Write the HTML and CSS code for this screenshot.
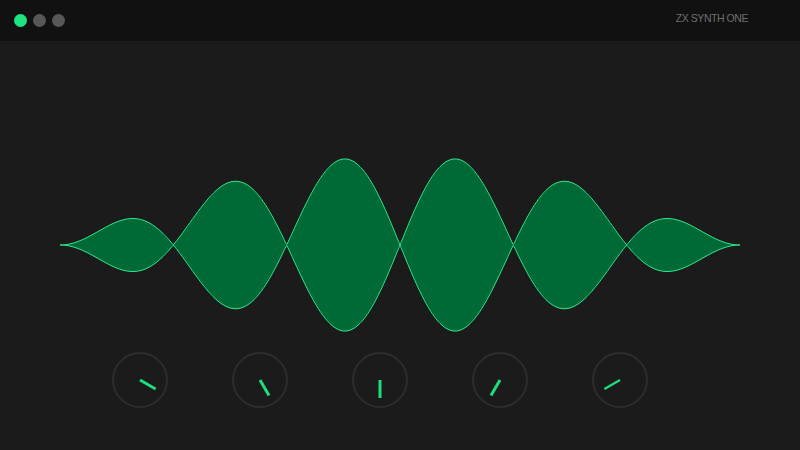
FILE: index.html
```html
<!DOCTYPE html>
<html>
<head>
<meta charset="utf-8">
<title>ZX Synth One</title>
<link rel="stylesheet" href="styles.css">
</head>
<body>
<header class="topbar">
  <div class="lights">
    <span class="light light-on"></span>
    <span class="light"></span>
    <span class="light"></span>
  </div>
  <div class="title">ZX SYNTH ONE</div>
</header>
<main class="stage">
  <svg class="wave" width="680" height="180" viewBox="0 0 680 180">
    <path id="wavefill" class="wave-fill" d=""></path>
  </svg>
  <div class="knobs">
    <svg class="knob" width="56" height="56" viewBox="0 0 56 56"><circle class="knob-ring" cx="28" cy="28" r="27"></circle><line class="knob-mark" x1="28" y1="28" x2="43.6" y2="37"></line></svg>
    <svg class="knob" width="56" height="56" viewBox="0 0 56 56"><circle class="knob-ring" cx="28" cy="28" r="27"></circle><line class="knob-mark" x1="28" y1="28" x2="37" y2="43.6"></line></svg>
    <svg class="knob" width="56" height="56" viewBox="0 0 56 56"><circle class="knob-ring" cx="28" cy="28" r="27"></circle><line class="knob-mark" x1="28" y1="28" x2="28" y2="46"></line></svg>
    <svg class="knob" width="56" height="56" viewBox="0 0 56 56"><circle class="knob-ring" cx="28" cy="28" r="27"></circle><line class="knob-mark" x1="28" y1="28" x2="19" y2="43.6"></line></svg>
    <svg class="knob" width="56" height="56" viewBox="0 0 56 56"><circle class="knob-ring" cx="28" cy="28" r="27"></circle><line class="knob-mark knob-mark-thin" x1="28" y1="28" x2="12.4" y2="37"></line></svg>
  </div>
</main>
<script src="script.js"></script>
</body>
</html>
```

FILE: styles.css
```css
html, body {
  margin: 0;
  padding: 0;
}
body {
  width: 800px;
  height: 450px;
  background: #1b1b1b;
  font-family: "Liberation Sans", Arial, sans-serif;
  overflow: hidden;
}
.topbar {
  height: 41px;
  background: #111111;
  display: flex;
  align-items: center;
  justify-content: space-between;
  padding: 0 52px 0 14px;
  box-sizing: border-box;
}
.lights {
  display: flex;
  gap: 6px;
}
.light {
  width: 13px;
  height: 13px;
  border-radius: 50%;
  background: #575757;
  display: block;
}
.light-on {
  background: #1de47f;
}
.title {
  color: #6f6f6f;
  font-size: 10.5px;
  letter-spacing: -0.45px;
  margin-top: -5px;
}
.stage {
  display: flex;
  flex-direction: column;
}
.wave {
  display: block;
  margin: 114px 0 0 60px;
}
.wave-fill {
  fill: #006a37;
  stroke: #2ee68a;
  stroke-width: 1;
  stroke-linejoin: round;
}
.knobs {
  display: flex;
  gap: 64px;
  padding-left: 112px;
  margin-top: 17px;
}
.knob {
  display: block;
}
.knob-ring {
  fill: none;
  stroke: #2d2d2d;
  stroke-width: 2;
}
.knob-mark {
  stroke: #1fdc7c;
  stroke-width: 3;
}
.knob-mark-thin {
  stroke-width: 2.4;
}
```

FILE: script.js
```js
(function () {
  var W = 680, C = 90, A = 89, N = 680;
  var top = [], bot = [];
  for (var i = 0; i <= N; i++) {
    var t = i / N;
    var a = A * Math.sin(Math.PI * t) * Math.abs(Math.sin(6 * Math.PI * t));
    var x = (t * W).toFixed(2);
    top.push(x + "," + (C - a).toFixed(2));
    bot.unshift(x + "," + (C + a).toFixed(2));
  }
  var d = "M" + top.join(" L") + " L" + bot.join(" L") + " Z";
  document.getElementById("wavefill").setAttribute("d", d);
})();
```
